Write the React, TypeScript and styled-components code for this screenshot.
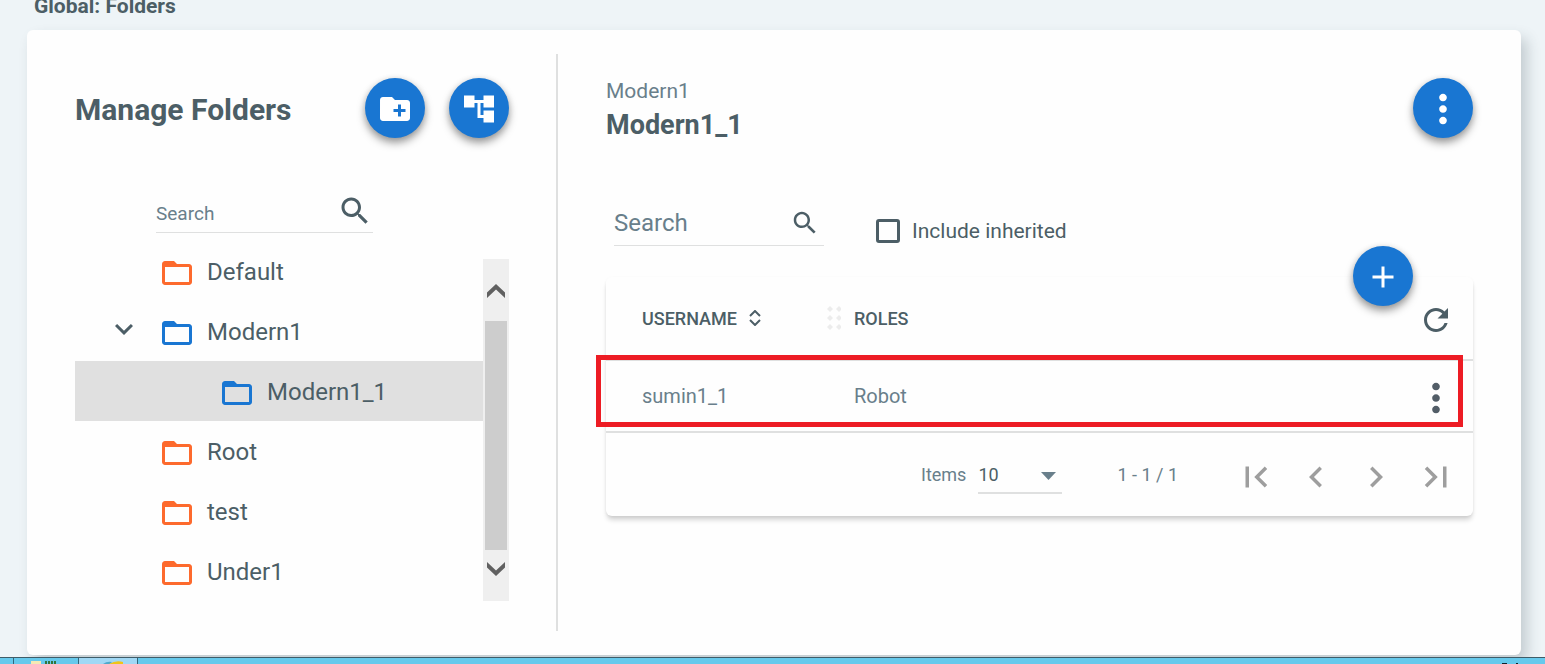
import React from "react";
import styled, { createGlobalStyle } from "styled-components";

const color = {
  page: "#eef4f7",
  surface: "#fefefe",
  text: "#4c5e66",
  muted: "#697f8b",
  line: "#dfe0e0",
  primary: "#1976d2",
  accent: "#fd6a2d",
  disabled: "#9e9e9e",
  highlight: "#ed1c24",
};

const GlobalStyle = createGlobalStyle`
  *, *::before, *::after { box-sizing: border-box; }
  body {
    margin: 0;
    overflow: hidden;
    background: ${color.page};
    color: ${color.text};
    font-family: Roboto, "Liberation Sans", sans-serif;
  }
  button, input, select { font: inherit; color: inherit; }
  button {
    display: inline-flex;
    align-items: center;
    justify-content: center;
    padding: 0;
    border: 0;
    background: none;
    cursor: pointer;
  }
  h1, h2, p, ul { margin: 0; padding: 0; }
`;

const Page = styled.div`
  display: flex;
  flex-direction: column;
  min-height: 100vh;
`;

const PageTitle = styled.h1`
  padding: 0 34px 18px;
  font-size: 21px;
  line-height: 12px;
  font-weight: 700;
`;

const Card = styled.main`
  flex: 1;
  display: flex;
  margin: 0 24px 2px 27px;
  padding: 24px 48px;
  border-radius: 6px;
  background: ${color.surface};
  box-shadow: 6px 8px 14px rgba(40, 60, 70, 0.22);
`;

const FolderPanel = styled.section`
  width: 483px;
  flex: none;
  padding: 24px 47px 30px 0;
  border-right: 2px solid ${color.line};
`;

const PanelHeader = styled.header`
  display: flex;
  justify-content: space-between;
  align-items: flex-start;
  height: 60px;
`;

const PanelTitle = styled.h2`
  font-size: 30px;
  line-height: 64px;
  font-weight: 700;
`;

const ButtonGroup = styled.div`
  display: flex;
  gap: 24px;
`;

const RoundButton = styled.button`
  width: 60px;
  height: 60px;
  flex: none;
  padding-top: 2px;
  border-radius: 50%;
  background: ${color.primary};
  color: #fff;
  box-shadow: 0 5px 9px rgba(0, 0, 0, 0.36), 0 1px 6px rgba(0, 0, 0, 0.12);
`;

const AddButton = styled(RoundButton)`
  position: absolute;
  top: -31px;
  right: 60px;
`;

const SearchField = styled.label<{ $compact?: boolean }>`
  display: flex;
  align-items: center;
  width: ${(p) => (p.$compact ? 217 : 210)}px;
  height: ${(p) => (p.$compact ? 41 : 46)}px;
  margin: ${(p) => (p.$compact ? "54px 0 8px 81px" : "0")};
  padding-right: ${(p) => (p.$compact ? 0 : 4)}px;
  border-bottom: 1px solid ${color.line};
  font-size: ${(p) => (p.$compact ? 19 : 24)}px;

  input {
    flex: 1;
    min-width: 0;
    height: 100%;
    padding: ${(p) => (p.$compact ? "2px 0 0" : "0")};
    border: 0;
    outline: 0;
    background: none;
  }
  input::placeholder {
    color: ${color.muted};
    opacity: 1;
  }
  svg {
    margin-bottom: ${(p) => (p.$compact ? 2 : 0)}px;
  }
`;

const TreeArea = styled.div`
  display: flex;
`;

const Tree = styled.ul`
  flex: 1;
  list-style: none;
`;

const TreeRow = styled.li<{ $level: number; $selected?: boolean }>`
  display: flex;
  align-items: center;
  height: 60px;
  padding-top: 2px;
  padding-left: ${(p) => 24 + p.$level * 60}px;
  background: ${(p) => (p.$selected ? "#e0e0e0" : "transparent")};
  font-size: 24px;
`;

const Toggle = styled.button`
  width: 50px;
  height: 50px;
  margin-right: 10px;
  padding-bottom: 6px;
`;

const FolderIcon = styled.span<{ $tone: string }>`
  display: flex;
  margin-right: 12px;
  padding-top: 2px;
  color: ${(p) => p.$tone};
`;

const ScrollTrack = styled.div`
  display: flex;
  flex-direction: column;
  width: 26px;
  margin-top: 18px;
  padding: 0 2px;
  background: #efefef;
  color: #606060;
`;

const ScrollButton = styled.button<{ $tall?: boolean }>`
  height: ${(p) => (p.$tall ? 62 : 51)}px;
  padding-top: ${(p) => (p.$tall ? 2 : 0)}px;
  padding-bottom: ${(p) => (p.$tall ? 0 : 13)}px;
`;

const ScrollThumb = styled.div`
  flex: 1;
  background: #cdcdcd;
`;

const DetailPanel = styled.section`
  flex: 1;
  min-width: 0;
  padding: 24px 0 0 48px;
`;

const DetailHeader = styled.header`
  display: flex;
  justify-content: space-between;
  align-items: flex-start;
`;

const ParentName = styled.p`
  color: ${color.muted};
  font-size: 21px;
  line-height: 26px;
`;

const FolderName = styled.h2`
  font-size: 27px;
  line-height: 42px;
  font-weight: 700;
`;

const Filters = styled.div`
  display: flex;
  align-items: flex-end;
  gap: 52px;
  margin-top: 54px;
  padding-left: 8px;
`;

const CheckLabel = styled.label`
  display: flex;
  align-items: center;
  gap: 12px;
  padding-bottom: 3px;
  font-size: 21px;
  line-height: 24px;

  input {
    appearance: none;
    width: 24px;
    height: 24px;
    margin: 0;
    border: 3px solid ${color.text};
    border-radius: 3px;
  }
  input:checked {
    background: ${color.primary};
  }
`;

const GridCard = styled.div`
  position: relative;
  margin-top: 31px;
  border-radius: 6px;
  box-shadow: 0 5px 5px -1px rgba(0, 0, 0, 0.16), 0 1px 3px rgba(0, 0, 0, 0.06);
`;

const UserTable = styled.table`
  width: 100%;
  table-layout: fixed;
  border-collapse: separate;
  border-spacing: 0;
  text-align: left;

  th, td {
    padding: 0;
    border-bottom: 2px solid ${color.line};
  }
  th {
    height: 84px;
    font-size: 18px;
    font-weight: 500;
  }
  td {
    height: 72px;
    color: ${color.muted};
    font-size: 20px;
  }
  th:first-child { width: 248px; padding: 0 13px 0 36px; }
  td:first-child { padding-left: 36px; }
  th:last-child { width: 75px; }
  td:last-child { color: #525d67; }
`;

const HeadCell = styled.div`
  display: flex;
  align-items: center;
  justify-content: space-between;
`;

const ActionCell = styled.div`
  display: flex;
  justify-content: center;
  padding-top: 4px;
`;

const SortButton = styled.button`
  gap: 12px;
  font-weight: 500;
`;

const Highlight = styled.div`
  position: absolute;
  top: 78px;
  left: -10px;
  right: 10px;
  height: 72px;
  border: 5px solid ${color.highlight};
  pointer-events: none;
`;

const Pager = styled.footer`
  display: flex;
  align-items: center;
  justify-content: flex-end;
  height: 83px;
  padding-right: 7px;
  color: ${color.muted};
  font-size: 18px;
`;

const PageSize = styled.label`
  display: flex;
  align-items: center;
  gap: 12px;
`;

const SelectBox = styled.span`
  position: relative;
  display: flex;
  width: 84px;
  margin-right: 55px;
  border-bottom: 2px solid ${color.line};

  select {
    appearance: none;
    width: 100%;
    height: 36px;
    padding: 2px 0 0;
    border: 0;
    background: none;
    color: ${color.text};
  }
  svg {
    position: absolute;
    right: 6px;
    top: 16px;
    pointer-events: none;
  }
`;

const PagerButtons = styled.div`
  display: flex;
  margin-left: 48px;
  padding-top: 4px;
  color: ${color.disabled};

  button { width: 60px; }
`;

const Taskbar = styled.div`
  display: flex;
  height: 7px;
  border-top: 1px solid #3f5c68;
  background: #66c9ec;
`;

const TaskItem = styled.div<{ $width: number; $active?: boolean }>`
  display: flex;
  align-items: flex-end;
  justify-content: center;
  width: ${(p) => p.$width}px;
  border-right: 1px solid #34667a;
  background: ${(p) => (p.$active ? "#a0d8f5" : "transparent")};
`;

const Tray = styled(TaskItem)`
  margin-left: auto;
  border: 0;
`;

const paths = {
  search:
    "M15.5 14h-.79l-.28-.27C15.41 12.59 16 11.11 16 9.5 16 5.91 13.09 3 9.5 3S3 5.91 3 9.5 5.91 16 9.5 16c1.61 0 3.09-.59 4.23-1.57l.27.28v.79l5 4.99L20.49 19l-4.99-5zm-6 0C7.01 14 5 11.99 5 9.5S7.01 5 9.5 5 14 7.01 14 9.5 11.99 14 9.5 14z",
  newFolder:
    "M20 6h-8l-2-2H4c-1.11 0-1.99.89-1.99 2L2 18c0 1.11.89 2 2 2h16c1.11 0 2-.89 2-2V8c0-1.11-.89-2-2-2zm-1 8h-3v3h-2v-3h-3v-2h3V9h2v3h3v2z",
  tree: "M22 11V3h-7v3H9V3H2v8h7V8h2v10h4v3h7v-8h-7v3h-2V8h2v3z",
  folder:
    "M20 6h-8l-2-2H4c-1.1 0-1.99.9-1.99 2L2 18c0 1.1.9 2 2 2h16c1.1 0 2-.9 2-2V8c0-1.1-.9-2-2-2zm0 12H4V8h16v10z",
  expand: "M7.41 8.59 12 13.17l4.59-4.58L18 10l-6 6-6-6z",
  more: "M12 8c1.1 0 2-.9 2-2s-.9-2-2-2-2 .9-2 2 .9 2 2 2zm0 2c-1.1 0-2 .9-2 2s.9 2 2 2 2-.9 2-2-.9-2-2-2zm0 6c-1.1 0-2 .9-2 2s.9 2 2 2 2-.9 2-2-.9-2-2-2z",
  add: "M19 13h-6v6h-2v-6H5v-2h6V5h2v6h6z",
  refresh:
    "M17.65 6.35C16.2 4.9 14.21 4 12 4c-4.42 0-7.99 3.58-7.99 8s3.57 8 7.99 8c3.73 0 6.84-2.55 7.73-6h-2.08c-.82 2.33-3.04 4-5.65 4-3.31 0-6-2.69-6-6s2.69-6 6-6c1.66 0 3.14.69 4.22 1.78L13 11h7V4l-2.35 2.35z",
  first: "M18.41 16.59 13.82 12l4.59-4.59L17 6l-6 6 6 6zM6 6h2v12H6z",
  prev: "M15.41 7.41 14 6l-6 6 6 6 1.41-1.41L10.83 12z",
  next: "M10 6 8.59 7.41 13.17 12l-4.58 4.59L10 18l6-6z",
  last: "M5.59 7.41 10.18 12l-4.59 4.59L7 18l6-6-6-6zM16 6h2v12h-2z",
};

function Icon({ name, size = 36 }: { name: keyof typeof paths; size?: number }) {
  return (
    <svg width={size} height={size} viewBox="0 0 24 24" fill="currentColor" aria-hidden="true">
      <path d={paths[name]} />
    </svg>
  );
}

function ScrollArrow({ down }: { down?: boolean }) {
  return (
    <svg width="18" height="14" viewBox="0 0 18 14" fill="currentColor" aria-hidden="true">
      <path d={down ? "M0 0 9 8.500 18 0V5.500L9 14 0 5.500z" : "M0 14V8.500L9 0l9 8.500V14L9 5.500z"} />
    </svg>
  );
}

const folders = [
  { name: "Default", level: 0, tone: color.accent },
  { name: "Modern1", level: 0, tone: color.primary, open: true },
  { name: "Modern1_1", level: 1, tone: color.primary, selected: true },
  { name: "Root", level: 0, tone: color.accent },
  { name: "test", level: 0, tone: color.accent },
  { name: "Under1", level: 0, tone: color.accent },
];

export default function App() {
  return (
    <Page>
      <GlobalStyle />
      <PageTitle>Global: Folders</PageTitle>
      <Card>
        <FolderPanel>
          <PanelHeader>
            <PanelTitle>Manage Folders</PanelTitle>
            <ButtonGroup>
              <RoundButton aria-label="New folder"><Icon name="newFolder" /></RoundButton>
              <RoundButton aria-label="Folder tree"><Icon name="tree" /></RoundButton>
            </ButtonGroup>
          </PanelHeader>
          <SearchField $compact>
            <input type="text" placeholder="Search" aria-label="Search folders" />
            <Icon name="search" />
          </SearchField>
          <TreeArea>
            <Tree>
              {folders.map((f) => (
                <TreeRow key={f.name} $level={f.level} $selected={f.selected}>
                  <Toggle aria-label={`Toggle ${f.name}`}>{f.open && <Icon name="expand" />}</Toggle>
                  <FolderIcon $tone={f.tone}><Icon name="folder" /></FolderIcon>
                  {f.name}
                </TreeRow>
              ))}
            </Tree>
            <ScrollTrack>
              <ScrollButton $tall aria-label="Scroll up"><ScrollArrow /></ScrollButton>
              <ScrollThumb />
              <ScrollButton aria-label="Scroll down"><ScrollArrow down /></ScrollButton>
            </ScrollTrack>
          </TreeArea>
        </FolderPanel>

        <DetailPanel>
          <DetailHeader>
            <div>
              <ParentName>Modern1</ParentName>
              <FolderName>Modern1_1</FolderName>
            </div>
            <RoundButton aria-label="Folder actions"><Icon name="more" size={46} /></RoundButton>
          </DetailHeader>
          <Filters>
            <SearchField>
              <input type="text" placeholder="Search" aria-label="Search users" />
              <Icon name="search" size={30} />
            </SearchField>
            <CheckLabel>
              <input type="checkbox" />
              Include inherited
            </CheckLabel>
          </Filters>
          <GridCard>
            <UserTable>
              <thead>
                <tr>
                  <th>
                    <HeadCell>
                      <SortButton>
                        USERNAME
                        <svg width="12" height="16" viewBox="0 0 12 16" fill="none" stroke="currentColor" strokeWidth="2" aria-hidden="true">
                          <path d="M1 6l5-5 5 5M1 10l5 5 5-5" />
                        </svg>
                      </SortButton>
                      <svg width="14" height="24" viewBox="0 0 14 24" fill="#ececec" aria-hidden="true">
                        {[3, 12, 21].map((y) => (
                          <g key={y}>
                            <path d={`M0 ${y}l3-3 3 3-3 3z`} />
                            <path d={`M9 ${y}l3-3 3 3-3 3z`} />
                          </g>
                        ))}
                      </svg>
                    </HeadCell>
                  </th>
                  <th>ROLES</th>
                  <th>
                    <ActionCell>
                      <button aria-label="Refresh"><Icon name="refresh" /></button>
                    </ActionCell>
                  </th>
                </tr>
              </thead>
              <tbody>
                <tr>
                  <td>sumin1_1</td>
                  <td>Robot</td>
                  <td>
                    <ActionCell>
                      <button aria-label="User actions"><Icon name="more" size={46} /></button>
                    </ActionCell>
                  </td>
                </tr>
              </tbody>
            </UserTable>
            <Pager>
              <PageSize>
                Items
                <SelectBox>
                  <select defaultValue="10">
                    <option>10</option>
                    <option>25</option>
                    <option>50</option>
                  </select>
                  <svg width="15" height="8" viewBox="0 0 15 8" fill={color.muted} aria-hidden="true">
                    <path d="M0 0h15L7.500 8z" />
                  </svg>
                </SelectBox>
              </PageSize>
              <span>1 - 1 / 1</span>
              <PagerButtons>
                <button aria-label="First page"><Icon name="first" size={42} /></button>
                <button aria-label="Previous page"><Icon name="prev" size={42} /></button>
                <button aria-label="Next page"><Icon name="next" size={42} /></button>
                <button aria-label="Last page"><Icon name="last" size={42} /></button>
              </PagerButtons>
            </Pager>
            <Highlight />
            <AddButton aria-label="Add user"><Icon name="add" /></AddButton>
          </GridCard>
        </DetailPanel>
      </Card>
      <Taskbar>
        <TaskItem $width={14} />
        <TaskItem $width={65}>
          <svg width="30" height="3" viewBox="0 0 30 3" aria-hidden="true">
            <path d="M0 0h10v3H0z" fill="#f4e9b4" />
            <path d="M14 0h2v3h-2zM17 0h2v3h-2zM20 0h2v3h-2zM23 0h2v3h-2z" fill="#32763d" />
          </svg>
        </TaskItem>
        <TaskItem $width={59} $active>
          <svg width="30" height="3" viewBox="0 0 30 3" aria-hidden="true">
            <path d="M10 3q4-3 9-2l-2 2z" fill="#4fa9cc" />
            <path d="M16 3q7-4 14-2v2z" fill="#f0c419" />
          </svg>
        </TaskItem>
        <Tray $width={57}>
          <svg width="30" height="1" viewBox="0 0 30 1" aria-hidden="true">
            <path d="M0 0h5v1H0zM14 0h2v1h-2z" fill="#10222b" />
          </svg>
        </Tray>
      </Taskbar>
    </Page>
  );
}
